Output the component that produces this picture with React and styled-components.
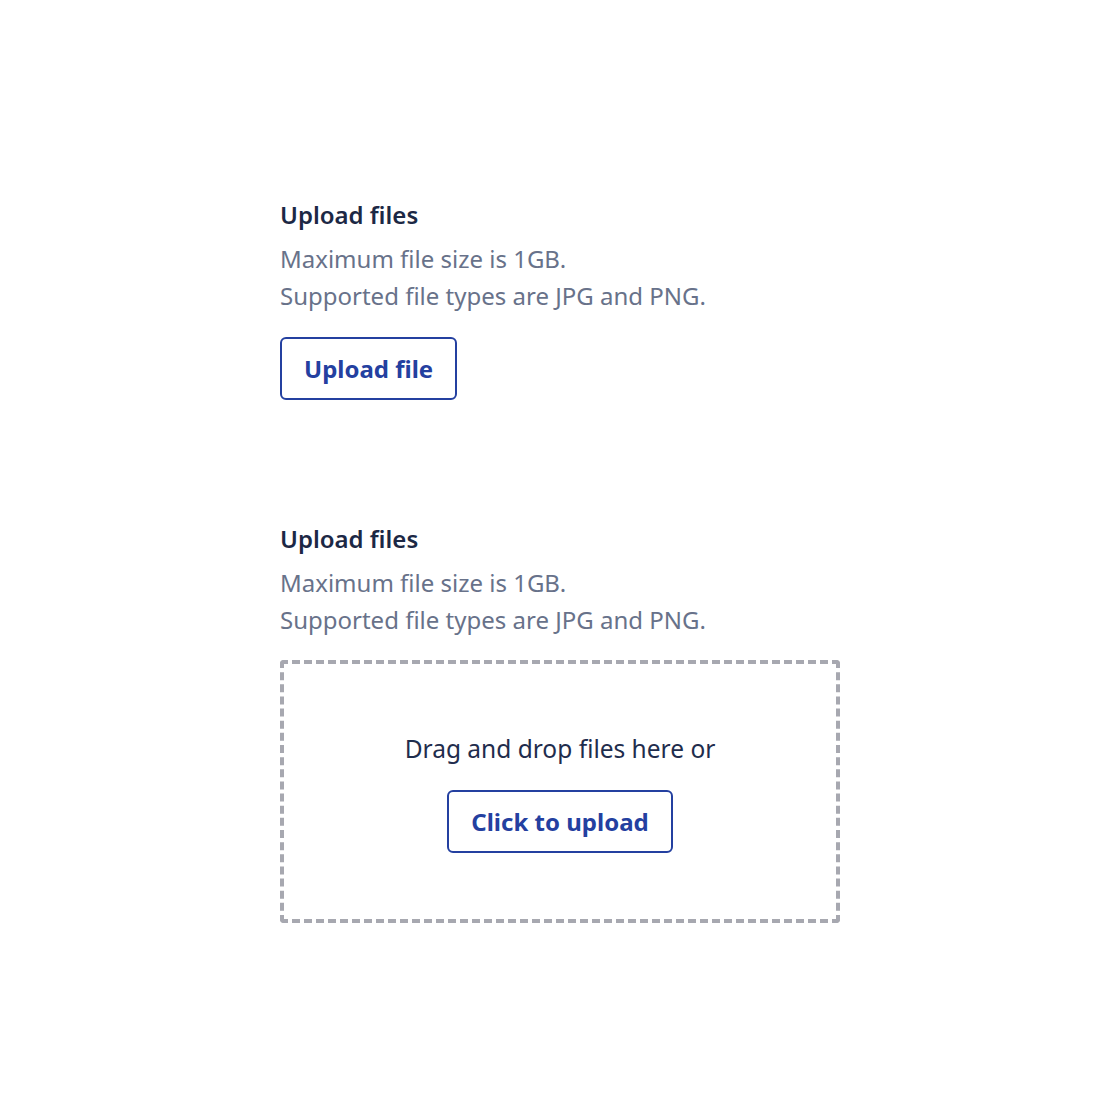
import React from "react";
import styled, { createGlobalStyle } from "styled-components";

const Global = createGlobalStyle`
  html, body { margin: 0; padding: 0; background: #ffffff; }
  body { font-family: "Noto Sans", "Open Sans", sans-serif; }
`;

const Page = styled.main`
  width: 1120px;
  min-height: 1120px;
  box-sizing: border-box;
  padding: 199px 280px 0 280px;
  display: flex;
  flex-direction: column;
  gap: 123px;
`;

const Section = styled.section`
  display: flex;
  flex-direction: column;
  align-items: flex-start;
`;

const Title = styled.h2`
  margin: 0;
  font-size: 24px;
  line-height: 32px;
  font-weight: 600;
  color: #1c2845;
`;

const Desc = styled.p`
  margin: 9px 0 0 0;
  font-size: 24px;
  line-height: 37px;
  font-weight: 400;
  color: #68728a;
`;

const Button = styled.button`
  box-sizing: border-box;
  height: 63px;
  padding: 0 22px;
  border: 2px solid #2440a0;
  border-radius: 6px;
  background: #ffffff;
  color: #2440a0;
  font-family: "Noto Sans", "Open Sans", sans-serif;
  font-size: 24px;
  font-weight: 700;
  cursor: pointer;
  margin-top: ${(p) => p.$mt || 0}px;
`;

const DropZone = styled.div`
  box-sizing: border-box;
  margin-top: 22px;
  width: 560px;
  height: 263px;
  border: 4px dashed #a7a8b0;
  border-radius: 4px;
  display: flex;
  flex-direction: column;
  align-items: center;
  justify-content: center;
  gap: 23px;
`;

const DropText = styled.div`
  font-size: 24.5px;
  line-height: 36px;
  color: #1f2d4d;
`;

export default function App() {
  return (
    <>
      <Global />
      <Page>
        <Section>
          <Title>Upload files</Title>
          <Desc>
            Maximum file size is 1GB.
            <br />
            Supported file types are JPG and PNG.
          </Desc>
          <Button $mt={23}>Upload file</Button>
        </Section>
        <Section>
          <Title>Upload files</Title>
          <Desc>
            Maximum file size is 1GB.
            <br />
            Supported file types are JPG and PNG.
          </Desc>
          <DropZone>
            <DropText>Drag and drop files here or</DropText>
            <Button>Click to upload</Button>
          </DropZone>
        </Section>
      </Page>
    </>
  );
}
